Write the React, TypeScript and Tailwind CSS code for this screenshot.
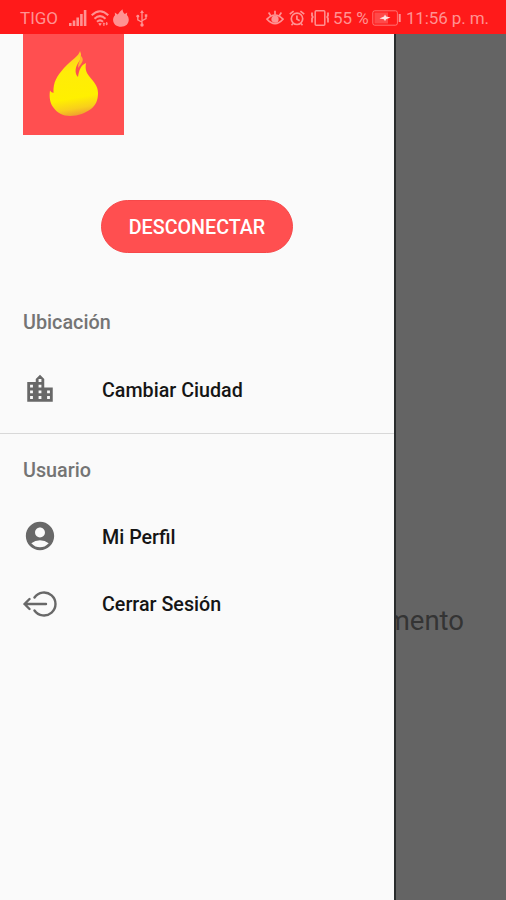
import React from 'react';
import { MdAccountCircle, MdLocationCity } from 'react-icons/md';

const SignalIcon = () => (
  <svg className="w-[18px] h-[16px]" viewBox="0 0 18 16" fill="currentColor">
    <rect x="0" y="13" width="2.6" height="3" />
    <rect x="3.7" y="10.5" width="2.6" height="5.5" />
    <rect x="7.4" y="7.5" width="2.6" height="8.5" />
    <rect x="11.1" y="4" width="2.6" height="12" />
    <rect x="14.8" y="0" width="2.6" height="16" />
  </svg>
);

const WifiIcon = () => (
  <svg className="w-[18px] h-[17px]" viewBox="0 0 18 17" fill="none" stroke="currentColor" strokeWidth="2">
    <path d="M.7 5.2Q9-2.8 17.3 5.2" />
    <path d="M3.5 8.7Q9 3.5 14.5 8.7" />
    <path d="M6 11.7Q9 9 12 11.7" />
    <path d="M7.2 13.6L9 16L10.8 13.6Q9 12.2 7.2 13.6Z" fill="currentColor" stroke="none" />
    <path d="M11.5 14.2l1.4-2 1.4 2zM14.3 13.6l1.4 2 1.4-2z" fill="currentColor" stroke="none" />
    <path d="M12.9 13.5v2.5M15.7 12v2.500" strokeWidth="1.1" />
  </svg>
);

const FireBadge = () => (
  <svg className="w-[16px] h-[18px]" viewBox="0 0 16 18" fill="currentColor">
    <path d="M9.400 0C9.400 1 6.800 2 5.600 4.600L4.600 5.600L1.800 3.600L2 6.200C-.8 9-.4 13.500 2.300 16C5.500 18.400 11 18.400 13.800 15.800C16.800 12.600 16 8 13.900 6L14.200 3.600L11.800 5C10.200 3.600 9.600 1.800 9.400 0Z" />
  </svg>
);

const UsbIcon = () => (
  <svg className="w-[12px] h-[17px]" viewBox="0 0 12 17" fill="none" stroke="currentColor" strokeWidth="1.3">
    <path d="M6 2v13M6 12.2L1.8 9.8V6.5M6 10.8l4-2.2V6" />
    <path d="M6 0l2 3H4z" fill="currentColor" stroke="none" />
    <circle cx="1.8" cy="6.2" r="1.4" fill="currentColor" stroke="none" />
    <rect x="8.8" y="4.3" width="2.5" height="2.5" fill="currentColor" stroke="none" />
    <circle cx="6" cy="15" r="1.7" fill="currentColor" stroke="none" />
  </svg>
);

const EyeIcon = () => (
  <svg className="w-[18px] h-[16px]" viewBox="0 0 18 16" fill="none" stroke="currentColor" strokeWidth="1.7">
    <path d="M1 9.2Q9 .8 17 9.2Q9 18 1 9.2Z" />
    <circle cx="9" cy="9.2" r="2.8" fill="currentColor" />
    <path d="M9 4.8V.7M4.8 5.7L2.6 2.6M13.2 5.7l2.2-3.1" />
  </svg>
);

const AlarmIcon = () => (
  <svg className="w-[16px] h-[16px]" viewBox="0 0 16 16" fill="none" stroke="currentColor" strokeWidth="1.7">
    <circle cx="8" cy="8.8" r="5.7" />
    <path d="M.8 4.2L4.6 1.1M15.2 4.2L11.4 1.1M7.9 5.6v3.5l2.7 1.7M4 13.5l-1.5 1.8M12 13.5l1.5 1.8" />
  </svg>
);

const VibrateIcon = () => (
  <svg className="w-[20px] h-[16px]" viewBox="0 0 20 16" fill="none" stroke="currentColor" strokeWidth="1.5">
    <rect x="5.2" y=".8" width="9.6" height="14.4" rx="1" />
    <path d="M2 2.5v3l.8 1.5-.8 1.500v4M18 2.500v3l-.8 1.500.8 1.500v4" strokeWidth="1.8" />
  </svg>
);

const BatteryIcon = () => (
  <svg className="w-[29px] h-[16px]" viewBox="0 0 29 16" fill="none" stroke="currentColor" strokeWidth="1">
    <rect x=".8" y=".8" width="24.6" height="14.4" rx="2" strokeOpacity=".75" />
    <rect x="2.5" y="2.5" width="13.5" height="11" fill="currentColor" fillOpacity=".4" stroke="none" />
    <path d="M27.7 4v8" strokeWidth="2" />
    <path d="M7.5 8.5L12 6.6L13 4.5L14.2 6.6L18.5 7.5L14 9.2L13 11.3L12 9.2Z" fill="#ffe3e3" stroke="none" />
  </svg>
);

const FlameLogo = () => (
  <svg className="w-[50px] h-[66px]" viewBox="0 0 50 66">
    <defs>
      <linearGradient id="flame" x1="0.45" y1="0" x2="0.58" y2="1">
        <stop offset="0" stopColor="#ffc52c" />
        <stop offset="0.3" stopColor="#ffec08" />
        <stop offset="0.72" stopColor="#fff000" />
        <stop offset="0.88" stopColor="#f8cf1c" />
        <stop offset="1" stopColor="#ee9c32" />
      </linearGradient>
    </defs>
    <path
      fill="url(#flame)"
      d="M31 0C30 5 22 9 15 17C8 25 4 31 4.5 42C3 41.5 2 41 1 39.5C0 46 1 52 4 56C8 62 14 65 21 65C30 65 36 62 42 58C47 54 49 49 49 42C49 35 45 31 40 25C37 21 36 18 37 12C32 14 30 19 29 26C26 23 26 18 28 14C30 10 34 7 31 0Z"
    />
    <path fill="#ffb52a" d="M30.5 3C34 7 35 9 32 13C31 14.5 30 15.5 29.5 17C28 12 33 9 30.5 3Z" />
  </svg>
);

const LogoutIcon = () => (
  <svg className="mt-px w-[34px] h-[26px]" viewBox="0 0 34 26" fill="none" stroke="currentColor" strokeWidth="2.4" strokeLinecap="round" strokeLinejoin="round">
    <path d="M11.5 6.5A11.5 11.5 0 1 1 11.5 19.5" />
    <path d="M23 13H1.5M6.5 8L1.5 13L6.5 18" />
  </svg>
);

interface MenuItemProps {
  icon: React.ReactNode;
  label: string;
}

const MenuItem: React.FC<MenuItemProps> = ({ icon, label }) => (
  <button className="w-full h-[67.5px] flex items-center pl-[23px] text-left">
    <span className="w-[79px] text-[#686868]">{icon}</span>
    <span className="pt-[4px] text-[19.7px] font-medium text-[#151515]">{label}</span>
  </button>
);

const StatusBar = () => (
  <header className="h-[34px] bg-[#ff1a1a] text-[#ff9292] flex items-center justify-between pl-[20px] pr-[17px] pt-[2px] text-[17px] whitespace-nowrap">
    <div className="flex items-center">
      <span className="w-[49px] pt-px">TIGO</span>
      <div className="flex items-center gap-[4px]">
        <SignalIcon />
        <WifiIcon />
        <FireBadge />
        <span className="ml-[3px]"><UsbIcon /></span>
      </div>
    </div>
    <div className="flex items-center">
      <div className="flex items-center gap-[5px] mr-[3px]">
        <EyeIcon />
        <AlarmIcon />
        <VibrateIcon />
      </div>
      <span className="w-[39px] pt-px">55 %</span>
      <BatteryIcon />
      <span className="ml-[5px] pt-px tracking-[-0.1px]">11:56 p. m.</span>
    </div>
  </header>
);

export default function App() {
  return (
    <div className="w-[506px] h-[900px] flex flex-col overflow-hidden font-[Roboto,sans-serif]">
      <StatusBar />

      <div className="flex flex-1 min-h-0">
        {/* Drawer */}
        <nav className="w-[394px] shrink-0 bg-[#fafafa]">
          <div className="ml-[23px] w-[101px] h-[101px] bg-[#ff4f50] flex justify-center pt-[17px]">
            <FlameLogo />
          </div>

          <div className="flex justify-center mt-[65px]">
            <button className="w-[192px] h-[53px] pt-[3px] rounded-full bg-[#ff4f50] border border-[#f64849] text-white text-[19.7px] font-medium">
              DESCONECTAR
            </button>
          </div>

          <h2 className="mt-[55px] h-[29px] leading-[29px] pl-[23px] text-[19.8px] font-medium text-[#747474]">Ubicación</h2>
          <div className="mt-[18px]">
            <MenuItem icon={<MdLocationCity className="w-[34px] h-[34px]" />} label="Cambiar Ciudad" />
          </div>

          <div className="mt-[10.5px] border-t border-[#d8d8d8]" />

          <h2 className="mt-[22px] h-[29px] leading-[29px] pl-[23px] text-[19.8px] font-medium text-[#747474]">Usuario</h2>
          <div className="mt-[17px]">
            <MenuItem icon={<MdAccountCircle className="w-[34px] h-[34px]" />} label="Mi Perfil" />
            <MenuItem icon={<LogoutIcon />} label="Cerrar Sesión" />
          </div>
        </nav>

        {/* Dimmed screen behind the drawer */}
        <main className="flex-1 min-w-0 overflow-hidden bg-[#646464] border-l-2 border-[#292c2d] flex justify-end pr-[42px] pt-[569px]">
          <p className="text-[27.5px] leading-[36px] text-[#343434] whitespace-nowrap">mento</p>
        </main>
      </div>
    </div>
  );
}
